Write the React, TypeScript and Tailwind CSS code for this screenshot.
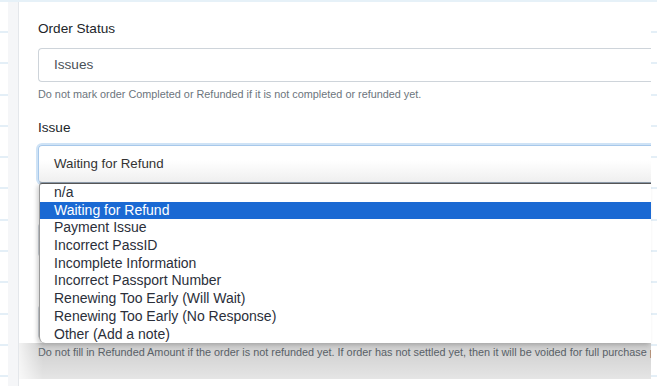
import React from "react";

const issueOptions = [
  "n/a",
  "Waiting for Refund",
  "Payment Issue",
  "Incorrect PassID",
  "Incomplete Information",
  "Incorrect Passport Number",
  "Renewing Too Early (Will Wait)",
  "Renewing Too Early (No Response)",
  "Other (Add a note)",
];

const DashStrip = ({ width }: { width: string }) => (
  <div className={`${width} shrink-0 flex flex-col pt-[29px] bg-white`}>
    {Array.from({ length: 12 }).map((_, idx) => (
      <div key={idx} className="h-[31.3px] shrink-0 border-t-2 border-[#e4eff7]" />
    ))}
  </div>
);

const FieldLabel = ({ children }: { children: React.ReactNode }) => (
  <div className="text-[13.6px] leading-[21px] text-[#212529]">{children}</div>
);

export default function App() {
  const selected = "Waiting for Refund";
  return (
    <div
      className="relative w-[657px] h-[386px] overflow-hidden bg-white flex flex-col"
      style={{ fontFamily: '"Liberation Sans", Arial, sans-serif' }}
    >
      <div className="h-[2px] bg-[#e6f1f8] shrink-0" />
      <div className="flex flex-1 min-h-0">
        <DashStrip width="w-[8px]" />
        <div className="w-[11px] shrink-0 bg-[#f5f6f8] border-r border-[#e4e7eb]" />
        {/* form panel */}
        <div className="flex-1 min-w-0 bg-white pt-[16px] pl-[19px]">
          <FieldLabel>Order Status</FieldLabel>
          <div className="mt-[9px] h-[34px] flex items-center border border-r-0 border-[#ced4da] rounded-l-[4px] pl-[15px] text-[13.6px] text-[#495057]">
            Issues
          </div>
          <div className="mt-[4px] text-[10.85px] leading-[16px] text-[#6c757d] whitespace-nowrap">
            Do not mark order Completed or Refunded if it is not completed or refunded yet.
          </div>

          <div className="mt-[15px]">
            <FieldLabel>Issue</FieldLabel>
          </div>
          <div className="mt-[7px] h-[38px] flex items-center pl-[15px] border border-r-0 border-[#a7c8ea] border-b-[#8d9cab] rounded-l-[4px] shadow-[0_0_0_2px_#cfe3f6] bg-[linear-gradient(to_bottom,#ffffff_40%,#efefef)] text-[13.3px] text-[#333]">
            <span>{selected}</span>
          </div>

          {/* fields hidden behind the open list */}
          <div className="mt-[12px] h-[21px]" />
          <div className="mt-[7px] h-[34px] border border-r-0 border-[#ced4da] rounded-l-[4px]" />
          <div className="mt-[20px] h-[21px]" />
          <div className="mt-[7px] h-[34px] border border-r-0 border-[#ced4da] rounded-l-[4px]" />
          <div className="mt-[5px] text-[10.85px] leading-[16px] text-[#6c757d] whitespace-nowrap overflow-hidden">
            Do not fill in Refunded Amount if the order is not refunded yet. If order has not settled yet, then it will be voided for full purchase price.
          </div>
        </div>
        <DashStrip width="w-[6px]" />
      </div>

      {/* open native list */}
      <div className="absolute left-[39px] top-[183px] w-[612px] h-[160px] bg-white border-t border-t-[#555] border-l border-l-[#9a9a9a] rounded-bl-[6px] rounded-tl-[3px] shadow-[-2px_2px_4px_rgba(0,0,0,0.18)] z-20 overflow-hidden">
        {issueOptions.map((opt) => (
          <div
            key={opt}
            className={`h-[17.7px] leading-[17.7px] pl-[14px] text-[14px] ${
              opt === selected ? "bg-[#1a69d3] text-white" : "text-[#2b2f3a]"
            }`}
          >
            {opt}
          </div>
        ))}
      </div>

      {/* list drop shadow */}
      <div className="absolute left-[19px] top-[343px] w-[632px] h-[36px] z-10 bg-[linear-gradient(to_right,rgba(255,255,255,0.75),rgba(255,255,255,0)_24px),linear-gradient(to_bottom,rgba(0,0,0,0.2),rgba(0,0,0,0.1))]" />
    </div>
  );
}
